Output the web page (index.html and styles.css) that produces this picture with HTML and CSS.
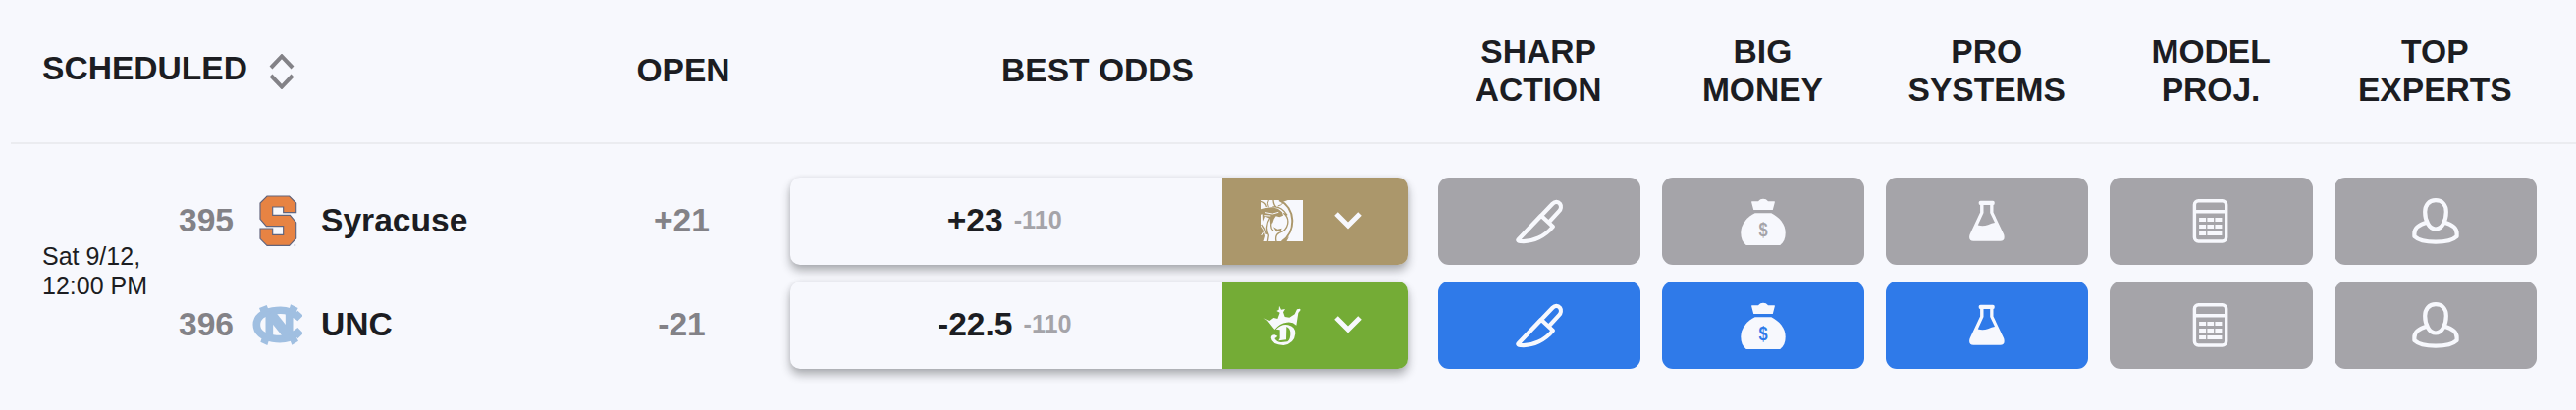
FILE: index.html
```html
<!DOCTYPE html>
<html lang="en">
<head>
  <meta charset="UTF-8" />
  <meta name="viewport" content="width=device-width, initial-scale=1.0"/>
  <title>Pro Report</title>
  <link rel="stylesheet" href="styles.css">
</head>
<body>
  <svg class="sprite" width="0" height="0">
    <symbol id="knife" viewBox="0 0 56 56">
      <path class="line" d="M6.6 47.2 L41.5 10.8 C44 8.2 47 8.2 49 10.7 C50.6 13 50 16.3 48 18.4 L38.6 28.6 M29.8 22.8 L41.9 34 C34 43.5 22 50 9 48.9 C6.5 48.6 6 48 6.6 47.2 Z"/>
    </symbol>
    <symbol id="bag" viewBox="0 0 56 56">
      <path class="solid" d="M16.6 8.3 H23 C25.5 5 30.5 5 33 8.3 H39.4 Q40 8.3 39.9 9 L37.8 17 H18.2 L16.1 9 Q16 8.3 16.6 8.3 Z"/>
      <path class="solid" d="M19.7 20.3 H36.3 C44.5 24.5 50.7 31.5 50.7 40.5 C50.7 46 49 50 45.3 53 H10.7 C7 50 5.3 46 5.3 40.5 C5.3 31.5 11.5 24.5 19.7 20.3 Z"/>
      <text class="dollar" transform="translate(28 43.8) scale(.78 1)" text-anchor="middle">$</text>
    </symbol>
    <symbol id="flask" viewBox="0 0 56 56">
      <path class="solid" fill-rule="evenodd" d="M21.5 7.7 H34 Q35.8 7.7 35.8 9.8 Q35.8 12 34.5 12 V19.5 L45.2 42 Q47 48.7 41.5 48.7 H14.2 Q8.7 48.7 10.6 42 L21.1 19.5 V12 Q19.6 12 19.6 9.8 Q19.6 7.7 21.5 7.7 Z M24.5 12 V20 L18.8 32.6 Q24 34.2 29 32.2 Q33 30.5 36 30 L31.2 20 V12 Z"/>
    </symbol>
    <symbol id="calc" viewBox="0 0 56 56">
      <rect class="line thin" x="11.4" y="7.7" width="32.3" height="41.3" rx="4"/>
      <path class="line thin" d="M11.4 18.8 H43.7"/>
      <path class="keys" d="M16.1 27 h7 m1.3 0 h6.7 m1.3 0 h7 M16.1 34 h7 m1.3 0 h6.7 m1.3 0 h7 M16.1 41 h7 m1.3 0 h15"/>
    </symbol>
    <symbol id="person" viewBox="0 0 56 56">
      <path class="line" d="M28 7.2 C21 7.2 17.2 12.3 17.2 19 C17.2 28 21.5 36.5 28 36.5 C34.5 36.5 38.8 28 38.8 19 C38.8 12.3 35 7.2 28 7.2 Z"/>
      <path class="line" d="M19 29.8 C11 32 6.4 35.5 6.4 41 V44 C10 47.5 18 49.6 28 49.6 C38 49.6 46 47.5 49.6 44 V41 C49.6 35.5 45 32 37 29.8"/>
    </symbol>
    <symbol id="chevron" viewBox="0 0 28 18">
      <path class="chevron-line" d="M2 2 L14 14 L26 2"/>
    </symbol>
  </svg>

  <div class="report">
    <div class="head">
      <div class="th scheduled">
        <span>SCHEDULED</span>
        <svg class="sort" viewBox="0 0 26 36">
          <path d="M2 14 L13 2.4 L24 14 M2 22 L13 33.6 L24 22"/>
        </svg>
      </div>
      <div class="th wide">OPEN</div>
      <div class="th wide">BEST ODDS</div>
      <div class="th">SHARP<br>ACTION</div>
      <div class="th">BIG<br>MONEY</div>
      <div class="th">PRO<br>SYSTEMS</div>
      <div class="th">MODEL<br>PROJ.</div>
      <div class="th">TOP<br>EXPERTS</div>
      <div class="th"></div>
    </div>

    <div class="game">
      <div class="matchup">
        <div class="time">Sat 9/12,<br>12:00 PM</div>
        <div class="teams">
          <div class="team">
            <span class="rotation">395</span>
            <svg class="team-logo" viewBox="50 54 156 162">
              <path fill="#e78343" stroke="#62647c" stroke-width="3.5" d="M98 60 H166 L187 81 V110 H148 V93 H115 V118 H168 L187 141 V189 L166 211 H98 L77 190 V159 H115 V178 H148 V152 H96 L77 130 V81 Z"/>
              <circle cx="183" cy="210" r="3" fill="#b5b8c8"/>
            </svg>
            <span class="name">Syracuse</span>
          </div>
          <div class="team">
            <span class="rotation">396</span>
            <svg class="team-logo" viewBox="50 372 156 162">
              <g fill="none" stroke="#a0bfe1">
                <path stroke-width="23" d="M188 426 C168 407 138 407 115 411 C84 416 66 432 66 453 C66 475 84 490 115 495 C138 499 168 497 188 479"/>
                <path stroke-width="23" d="M105 412 V492 M166 412 V492"/>
                <path stroke-width="30" d="M108 418 L162 486"/>
              </g>
              <path fill="#a0bfe1" d="M74 402 L97 393 L104 410 L80 418 Z M170 391 L193 402 L186 416 L164 412 Z M192 410 L208 425 L192 442 L176 430 Z M192 462 L209 479 L192 496 L176 474 Z M84 488 L106 494 L99 516 L78 506 Z M166 494 L186 489 L194 503 L174 515 Z"/>
            </svg>
            <span class="name">UNC</span>
          </div>
        </div>
      </div>

      <div class="stack open">
        <span>+21</span>
        <span>-21</span>
      </div>

      <div class="stack odds">
        <div class="best">
          <div class="line-odds"><b>+23</b><small>-110</small></div>
          <div class="book mgm">
            <svg class="book-logo" viewBox="0 0 126 126">
              <rect width="126" height="126" fill="#f7f8fd"/>
              <g fill="none" stroke="#ab976b">
                <path stroke-width="6" d="M54 0 C104 22 107 96 62 127"/>
                <path stroke-width="4" d="M36 0 Q37 16 45 21 M0 4 Q14 8 16 21 M34 21 Q60 17 78 46 M67 40 C90 58 82 92 54 100 C44 105 42 114 45 127 M26 54 C14 72 14 94 22 108 L19 127 M32 60 C27 76 28 88 36 94 M2 75 Q13 88 16 105"/>
                <path stroke-width="3" d="M22 0 Q16 8 22 22 M50 18 Q60 16 66 8"/>
              </g>
              <path fill="#ab976b" d="M0 28 L14 24 L32 22 L50 26 L63 37 L66 47 L55 52 L44 49 L38 58 L34 70 L27 73 L26 56 L12 50 L6 65 L5 43 L0 44 Z M36 82 L49 89 L62 86 L59 94 L45 97 Z M54 0 L80 0 L66 5 Z M0 80 L8 92 L12 110 L7 127 L0 127 Z M62 127 L84 112 L76 127 Z"/>
              <path fill="none" stroke="#f7f8fd" stroke-width="3" d="M12 38 L34 42 L52 37 M10 47 L28 48 M2 108 L8 98"/>
            </svg>
            <svg class="chevron"><use href="#chevron"/></svg>
          </div>
        </div>
        <div class="best">
          <div class="line-odds"><b>-22.5</b><small>-110</small></div>
          <div class="book dk">
            <svg class="book-logo" viewBox="0 0 126 126">
              <g fill="#f7f8fd">
                <path d="M7 43 L25 51 L37 42 L49 45 L56 26 L46 21 L53 17 L54 5 L60 17 L72 15 L66 25 L71 39 L85 41 L101 31 L108 16 L117 14 L119 18 L112 27 L106 65 Q94 53 77 56 Q55 59 40 78 L18 50 Z"/>
                <path d="M44 77 Q62 59 81 64 Q103 69 103 90 Q100 121 67 126 Q31 125 29 103 Q30 94 40 94 L49 98 L44 103 L40 105 Q47 117 60 117 L79 115 Q89 107 88 87 Q87 74 76 69 L75 109 L52 112 L56 105 V79 Z"/>
              </g>
            </svg>
            <svg class="chevron"><use href="#chevron"/></svg>
          </div>
        </div>
      </div>

      <div class="stack signal">
        <div class="btn"><svg><use href="#knife"/></svg></div>
        <div class="btn active"><svg><use href="#knife"/></svg></div>
      </div>
      <div class="stack signal">
        <div class="btn"><svg><use href="#bag"/></svg></div>
        <div class="btn active"><svg><use href="#bag"/></svg></div>
      </div>
      <div class="stack signal">
        <div class="btn"><svg><use href="#flask"/></svg></div>
        <div class="btn active"><svg><use href="#flask"/></svg></div>
      </div>
      <div class="stack signal">
        <div class="btn"><svg><use href="#calc"/></svg></div>
        <div class="btn"><svg><use href="#calc"/></svg></div>
      </div>
      <div class="stack signal">
        <div class="btn"><svg><use href="#person"/></svg></div>
        <div class="btn"><svg><use href="#person"/></svg></div>
      </div>
    </div>
  </div>
</body>
</html>
```
FILE: styles.css
```css
:root {
  --bg: #f7f8fd;
  --text: #1c1d22;
  --muted: #838287;
  --light: #a5a4a9;
  --blue: #2f7ae9;
  --columns: 599px 172px 672px repeat(5, 228.3px) 1fr;
}

* {
  box-sizing: border-box;
}

body {
  margin: 0;
  min-height: 100vh;
  background-color: var(--bg);
  color: var(--text);
  font-family: "Liberation Sans", Arial, sans-serif;
  font-size: 33.6px;
  font-weight: bold;
  line-height: 39px;
}

svg {
  display: block;
  flex: none;
}

.sprite {
  display: none;
}

.report {
  margin-left: 11px;
}

.head,
.game {
  display: grid;
  grid-template-columns: var(--columns);
}

.head {
  height: 147px;
  border-bottom: 2px solid #ebecf0;
}

.th {
  display: flex;
  align-items: center;
  justify-content: center;
  text-align: center;
  padding: 0 2px 2px 0;
}

.th.wide {
  padding-right: 0;
}

.th.scheduled {
  justify-content: flex-start;
  padding-left: 32px;
  padding-bottom: 6px;
  gap: 22px;
}

.sort {
  width: 26px;
  height: 36px;
  margin-top: 6px;
  fill: none;
  stroke: var(--muted);
  stroke-width: 4;
}

.game {
  padding: 33.5px 0 42px;
}

.matchup {
  display: flex;
  padding-left: 32px;
}

.time {
  width: 139px;
  align-self: center;
  font-size: 25px;
  font-weight: normal;
  line-height: 30px;
  padding-bottom: 4px;
}

.stack,
.teams {
  display: flex;
  flex-direction: column;
  gap: 17px;
}

.team {
  display: flex;
  align-items: center;
  height: 89px;
}

.rotation,
.name {
  padding-bottom: 2px;
}

.rotation {
  width: 74px;
  color: var(--muted);
}

.team-logo {
  width: 52px;
  height: 54px;
  margin-right: 19px;
}

.open span {
  height: 89px;
  line-height: 87px;
  text-align: center;
  color: var(--muted);
  padding-right: 3px;
}

.odds {
  padding: 0 20px 0 23px;
}

.best {
  display: flex;
  height: 89px;
  border-radius: 10px;
  box-shadow: 0 6px 10px rgba(28, 29, 34, 0.33), 0 0 5px rgba(28, 29, 34, 0.08);
  background-color: var(--bg);
}

.line-odds {
  flex: 1;
  display: flex;
  align-items: center;
  justify-content: center;
  gap: 11px;
  padding: 0 3px 1px 0;
}

.line-odds small {
  font-size: 25.2px;
  color: var(--light);
}

.book {
  width: 189.5px;
  display: flex;
  align-items: center;
  padding-left: 40.5px;
  gap: 32px;
  border-radius: 0 10px 10px 0;
}

.mgm {
  background-color: #ab976b;
}

.dk {
  background-color: #74ac36;
}

.book-logo {
  width: 42px;
  height: 42px;
}

.chevron {
  width: 28px;
  height: 18px;
}

.chevron-line {
  fill: none;
  stroke: var(--bg);
  stroke-width: 5;
}

.signal {
  padding: 0 11.6px 0 10.5px;
}

.btn {
  --btn: var(--light);
  display: flex;
  align-items: center;
  justify-content: center;
  height: 89px;
  border-radius: 11px;
  background-color: var(--btn);
}

.btn.active {
  --btn: var(--blue);
}

.btn svg {
  width: 56px;
  height: 56px;
}

.line {
  fill: none;
  stroke: var(--bg);
  stroke-width: 4.2;
  stroke-linejoin: round;
}

.line.thin {
  stroke-width: 3.4;
}

.solid {
  fill: var(--bg);
}

.keys {
  fill: none;
  stroke: var(--bg);
  stroke-width: 4;
}

.dollar {
  fill: var(--btn);
  font-size: 21px;
  font-weight: bold;
}
```
